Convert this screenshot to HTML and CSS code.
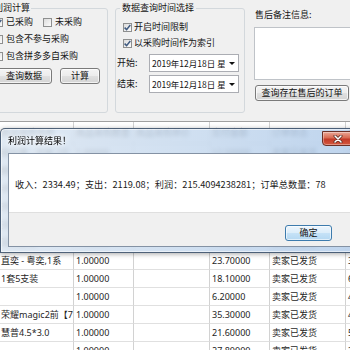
FILE: index.html
```html
<!DOCTYPE html>
<html lang="zh-CN">
<head>
<meta charset="utf-8">
<title>利润计算</title>
<link rel="stylesheet" href="styles.css">
</head>
<body>
<div class="top">
  <div class="grp g1">
    <span class="legend">利润计算</span>
    <div class="row r1">
      <label class="chk"><span class="cb"><svg viewBox="0 0 9 9" width="9" height="9"><path d="M1.6 4.6 L3.6 6.6 L7.3 2" fill="none" stroke="#3f5a80" stroke-width="1.5"/></svg></span>已采购</label>
      <label class="chk"><span class="cb"></span>未采购</label>
    </div>
    <div class="row"><label class="chk"><span class="cb"></span>包含不参与采购</label></div>
    <div class="row"><label class="chk"><span class="cb"></span>包含拼多多自采购</label></div>
    <div class="btns">
      <button class="btn b-query">查询数据</button>
      <button class="btn b-calc">计算</button>
    </div>
  </div>

  <div class="grp g2">
    <span class="legend">数据查询时间选择</span>
    <div class="row"><label class="chk"><span class="cb"><svg viewBox="0 0 9 9" width="9" height="9"><path d="M1.6 4.6 L3.6 6.6 L7.3 2" fill="none" stroke="#3f5a80" stroke-width="1.5"/></svg></span>开启时间限制</label></div>
    <div class="row"><label class="chk"><span class="cb"><svg viewBox="0 0 9 9" width="9" height="9"><path d="M1.6 4.6 L3.6 6.6 L7.3 2" fill="none" stroke="#3f5a80" stroke-width="1.5"/></svg></span>以采购时间作为索引</label></div>
    <div class="date-row d1">
      <span class="dlabel">开始:</span>
      <div class="picker"><span class="ptext">2019年12月18日 星期三</span><span class="pbtn"><i class="arrow"></i></span></div>
    </div>
    <div class="date-row d2">
      <span class="dlabel">结束:</span>
      <div class="picker"><span class="ptext">2019年12月18日 星期三</span><span class="pbtn"><i class="arrow"></i></span></div>
    </div>
  </div>

  <div class="side">
    <div class="side-label">售后备注信息:</div>
    <div class="memo"></div>
    <button class="btn btn-after">查询存在售后的订单</button>
  </div>
</div>

<div class="grid">
  <div class="thead">
    <div class="c">商品采购名称</div><div class="c">商品采购数量</div><div class="c">商品采购单价</div><div class="c">实付金额</div><div class="c">订单状态</div><div class="c">售价</div>
  </div>
  <div class="trow"><div class="c">钢化膜 - 全屏,2片</div><div class="c">1.00000</div><div class="c"></div><div class="c">12.50000</div><div class="c">卖家已发货</div><div class="c">28.</div></div>
  <div class="trow"><div class="c">数据线1米</div><div class="c">1.00000</div><div class="c"></div><div class="c">9.80000</div><div class="c">卖家已发货</div><div class="c">19.</div></div>
  <div class="trow"><div class="c">手机壳磨砂</div><div class="c">1.00000</div><div class="c"></div><div class="c">15.20000</div><div class="c">卖家已发货</div><div class="c">36.</div></div>
  <div class="trow"><div class="c">充电头快充</div><div class="c">1.00000</div><div class="c"></div><div class="c">31.00000</div><div class="c">卖家已发货</div><div class="c">52.</div></div>
  <div class="trow"><div class="c">支架 - 桌面</div><div class="c">1.00000</div><div class="c"></div><div class="c">8.60000</div><div class="c">卖家已发货</div><div class="c">21.</div></div>
  <div class="trow"><div class="c">耳机套装</div><div class="c">1.00000</div><div class="c"></div><div class="c">19.90000</div><div class="c">卖家已发货</div><div class="c">41.</div></div>
  <div class="trow"><div class="c">直奕 - 粤奕,1系</div><div class="c">1.00000</div><div class="c"></div><div class="c">23.70000</div><div class="c">卖家已发货</div><div class="c">3</div></div>
  <div class="trow"><div class="c">1套5支装</div><div class="c">1.00000</div><div class="c"></div><div class="c">18.10000</div><div class="c">卖家已发货</div><div class="c">6</div></div>
  <div class="trow"><div class="c"></div><div class="c">1.00000</div><div class="c"></div><div class="c">6.20000</div><div class="c">卖家已发货</div><div class="c">4</div></div>
  <div class="trow"><div class="c">荣耀magic2前【7寸】</div><div class="c">1.00000</div><div class="c"></div><div class="c">35.30000</div><div class="c">卖家已发货</div><div class="c">4</div></div>
  <div class="trow"><div class="c">慧普4.5*3.0</div><div class="c">1.00000</div><div class="c"></div><div class="c">21.60000</div><div class="c">卖家已发货</div><div class="c">5</div></div>
  <div class="trow"><div class="c"></div><div class="c">1.00000</div><div class="c"></div><div class="c">27.80000</div><div class="c">卖家已发货</div><div class="c">3</div></div>
</div>

<div class="dialog">
  <div class="titlebar">
    <span class="title">利润计算结果！</span>
    <span class="close"><svg viewBox="0 0 10 8" width="10" height="8"><path d="M2 1 L8 7 M8 1 L2 7" stroke="#5a2a22" stroke-width="3" stroke-linecap="round"/><path d="M2 1 L8 7 M8 1 L2 7" stroke="#ffffff" stroke-width="1.5" stroke-linecap="round"/></svg></span>
  </div>
  <div class="client">
    <div class="msg">收入：2334.49；支出：2119.08；利润：215.4094238281；订单总数量：78</div>
    <div class="foot"><button class="ok">确定</button></div>
  </div>
</div>
</body>
</html>
```

FILE: styles.css
```css
* { box-sizing: border-box; }

html, body { margin: 0; padding: 0; }

body {
  width: 350px;
  height: 350px;
  overflow: hidden;
  position: relative;
  background: #f0f0f0;
  font-family: "Noto Sans CJK SC", "Noto Sans", sans-serif;
  font-size: 9px;
  color: #141414;
}

/* ---------- top panel ---------- */
.top {
  display: flex;
  align-items: flex-start;
  height: 121px;
}

.grp {
  position: relative;
  flex: none;
  margin-top: 8px;
  height: 105px;
  border: 1px solid #d3d8dc;
  border-radius: 3px;
}

.g1 { width: 116px; margin-left: -8px; padding: 7px 0 0 1px; }
.g2 { width: 130px; margin-left: 7px; padding: 12px 0 0 7px; }

.legend {
  position: absolute;
  top: -7px;
  left: 0;
  padding: 0 1px;
  line-height: 12px;
  background: #f0f0f0;
  white-space: nowrap;
}
.g2 .legend { left: 4px; padding: 0 2px; }

.row {
  display: flex;
  align-items: center;
  height: 12px;
  line-height: 12px;
}
.g1 .row + .row { margin-top: 5px; }
.g2 .row + .row { margin-top: 4px; }

.chk {
  display: flex;
  align-items: center;
  gap: 3px;
  white-space: nowrap;
}
.g2 .chk { gap: 2px; }
.r1 .chk + .chk { margin-left: 10px; }

.cb {
  flex: none;
  width: 9px;
  height: 9px;
  border: 1px solid #8e8f8f;
  background: linear-gradient(135deg, #dcdcdc, #fcfcfc);
  display: flex;
  align-items: center;
  justify-content: center;
  overflow: hidden;
}
.cb svg { display: block; flex: none; }

.btns {
  display: flex;
  gap: 8px;
  margin: 6px 0 0 2px;
}

.btn {
  height: 16px;
  padding: 0;
  border: 1px solid #7a7a7a;
  border-radius: 3px;
  background: linear-gradient(#f4f4f4 0%, #ececec 50%, #e0e0e0 51%, #d4d4d4 100%);
  box-shadow: inset 0 0 0 1px rgba(255, 255, 255, 0.7);
  font: inherit;
  line-height: 14px;
  color: #111;
  white-space: nowrap;
}
.b-query { width: 56px; }
.b-calc { width: 40px; }

.date-row {
  display: flex;
  align-items: center;
  height: 18px;
  margin-left: -6px;
}
.d1 { margin-top: 5px; }
.d2 { margin-top: 3px; }

.dlabel { width: 32px; flex: none; line-height: 12px; }

.picker {
  width: 90px;
  height: 18px;
  border: 1px solid #abadb3;
  background: #fff;
  display: flex;
  overflow: hidden;
}
.ptext {
  flex: 1;
  overflow: hidden;
  white-space: nowrap;
  padding-left: 2px;
  font-size: 8.5px;
  line-height: 16px;
}
.pbtn {
  flex: none;
  width: 13px;
  display: flex;
  align-items: center;
  justify-content: center;
}
.arrow {
  display: block;
  width: 0;
  height: 0;
  border-left: 3px solid transparent;
  border-right: 3px solid transparent;
  border-top: 3px solid #111;
}

.side {
  flex: none;
  width: 100px;
  margin-left: 9px;
  padding-top: 9px;
}
.side-label { line-height: 12px; margin-left: 1px; white-space: nowrap; }
.memo {
  margin-top: 6px;
  width: 100px;
  height: 53px;
  border: 1px solid #bfc3c8;
  background: #fff;
}
.btn-after { display: block; margin: 5px 0 0 1px; width: 94px; }

/* ---------- grid ---------- */
.grid {
  margin-left: -1px;
  width: 440px;
  border-top: 1px solid #a0a0a0;
  background: #fff;
  height: 240px;
  font-family: "Noto Sans", "Noto Sans CJK SC", sans-serif;
  color: #1e1e1e;
}
.thead, .trow {
  display: grid;
  grid-template-columns: 75px 60px 76px 60px 76px 93px;
}
.thead { height: 22px; color: #333; }
.trow { height: 18px; }

.c {
  padding-left: 2px;
  border-right: 1px solid #d2d2d2;
  border-bottom: 1px solid #e0e0e0;
  white-space: nowrap;
  overflow: hidden;
  line-height: 17px;
}
.thead .c { line-height: 21px; border-bottom-color: #d2d2d2; }

/* ---------- dialog ---------- */
.dialog {
  position: absolute;
  left: 0;
  top: 128px;
  width: 360px;
  height: 125px;
  display: flex;
  flex-direction: column;
  border: 1px solid rgba(45, 65, 90, 0.8);
  border-radius: 5px 5px 0 0;
  background: linear-gradient(to right, rgba(218, 229, 241, 0.84), rgba(198, 217, 238, 0.84) 55%, rgba(178, 204, 234, 0.84));
  backdrop-filter: blur(2px);
  box-shadow: inset 0 0 0 1px rgba(255, 255, 255, 0.55), 0 1px 5px rgba(0, 0, 0, 0.35);
}

.titlebar {
  flex: none;
  height: 24px;
  display: flex;
  align-items: flex-start;
  padding-left: 7px;
}
.title {
  margin-top: 6px;
  line-height: 12px;
  color: #000;
  text-shadow: 0 0 4px #fff, 0 0 6px #fff;
}
.close {
  margin-left: auto;
  margin-right: 5px;
  margin-top: 2px;
  width: 32px;
  height: 15px;
  border: 1px solid #6b3027;
  border-radius: 0 0 4px 4px;
  background: linear-gradient(#eaa797 0%, #d86a52 45%, #c23a28 55%, #d4583f 100%);
  box-shadow: inset 0 0 0 1px rgba(255, 255, 255, 0.35);
  display: flex;
  align-items: center;
  justify-content: center;
}
.close svg { display: block; }

.client {
  flex: 1;
  margin: 0 7px 5px 7px;
  border: 1px solid rgba(80, 100, 125, 0.7);
  background: #fff;
  display: flex;
  flex-direction: column;
}
.msg {
  flex: none;
  height: 58px;
  padding: 24px 0 0 6px;
  font-size: 9.2px;
  line-height: 12px;
  white-space: nowrap;
  color: #1a1a1a;
}
.foot {
  flex: 1;
  background: #f0f0f0;
  border-top: 1px solid #dfdfdf;
  display: flex;
  justify-content: flex-end;
  align-items: flex-start;
  padding: 12px 19px 0 0;
}
.ok {
  width: 47px;
  height: 16px;
  padding: 0;
  border: 1px solid #3d7bad;
  border-radius: 3px;
  background: linear-gradient(#edf6fd 0%, #dcedfa 50%, #c6e2f7 51%, #b4d8f2 100%);
  box-shadow: inset 0 0 0 1px rgba(255, 255, 255, 0.6);
  font: inherit;
  line-height: 14px;
  color: #111;
}
```
